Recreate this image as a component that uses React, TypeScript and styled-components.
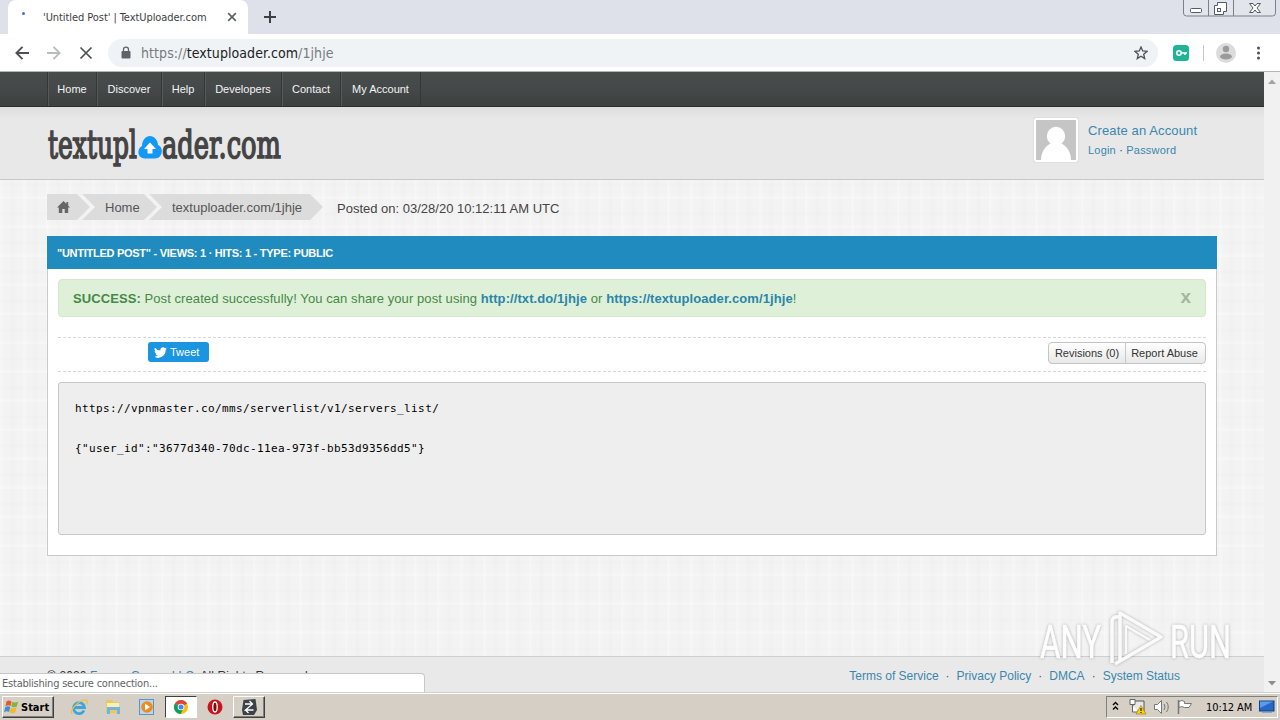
import type { ReactNode } from "react";
import styled, { createGlobalStyle } from "styled-components";

const navItems = [
  { label: "Home", width: 49 },
  { label: "Discover", width: 65 },
  { label: "Help", width: 43 },
  { label: "Developers", width: 77 },
  { label: "Contact", width: 59 },
  { label: "My Account", width: 80 },
];

const footerLinks = ["Terms of Service", "Privacy Policy", "DMCA", "System Status"];

const App = () => {
  return (
    <Screen>
      <GlobalStyle />
      <TabStrip>
        <Tab>
          <Spinner />
          <TabTitle>'Untitled Post' | TextUploader.com</TabTitle>
          <TabClose viewBox="0 0 10 10">
            <path d="M1.2 1.2l7.6 7.6M8.8 1.2L1.2 8.8" stroke="#5f6368" strokeWidth="1.7" />
          </TabClose>
        </Tab>
        <NewTab viewBox="0 0 12 12">
          <path d="M6 0v12M0 6h12" stroke="#3c4043" strokeWidth="2" />
        </NewTab>
        <WindowButtons />
      </TabStrip>
      <Toolbar>
        <ToolbarIcons />
        <AddressBar>
          <svg width="10" height="13" viewBox="0 0 10 13">
            <path d="M2.5 6V3.6a2.5 2.5 0 0 1 5 0V6" fill="none" stroke="#5f6368" strokeWidth="1.3" />
            <rect x="0.5" y="5" width="9" height="7.5" rx="1" fill="#5f6368" />
          </svg>
          <Url>
            https://<b>textuploader.com</b>/1jhje
          </Url>
          <svg width="14" height="14" viewBox="0 0 14 14">
            <path
              d="M7 1l1.7 4 4.3.4-3.3 2.8 1 4.3L7 10.2l-3.7 2.3 1-4.3L1 5.400 5.300 5z"
              fill="none"
              stroke="#4d5156"
              strokeWidth="1.3"
            />
          </svg>
        </AddressBar>
        <BrowserActions />
      </Toolbar>
      <Viewport>
        <Page>
          <Nav>
            {navItems.map((item) => (
              <NavItem key={item.label} $width={item.width}>
                {item.label}
              </NavItem>
            ))}
          </Nav>
          <Header>
            <Logo />
            <Account>
              <Avatar viewBox="0 0 40 40">
                <rect width="40" height="40" fill="#c5c5c5" />
                <circle cx="20" cy="16" r="9.2" fill="#fff" />
                <path d="M5 40c0-9 5-14 10-17h10c5 3 10 8 10 17z" fill="#fff" />
              </Avatar>
              <AccountLinks>
                <Text $size={13} $spacing={0.13} $color="#3a87ad">
                  Create an Account
                </Text>
                <Text $size={11} $spacing={0.2} $color="#3a87ad">
                  Login <i>·</i> Password
                </Text>
              </AccountLinks>
            </Account>
          </Header>
          <Main>
            <CrumbRow>
              <Crumb $width={43} $first>
                <svg width="13" height="13" viewBox="0 0 13 13">
                  <path d="M6.500 0L0 6.400h1.800V12h3.500V8h2.400v4h3.500V6.400H13L11.200 4.600V1H9.400v1.800z" fill="#666" />
                </svg>
              </Crumb>
              <Crumb $width={75}>Home</Crumb>
              <Crumb $width={174}>textuploader.com/1jhje</Crumb>
              <Posted>Posted on: 03/28/20 10:12:11 AM UTC</Posted>
            </CrumbRow>
            <Panel>
              <PanelTitle>"UNTITLED POST" - VIEWS: 1 · HITS: 1 - TYPE: PUBLIC</PanelTitle>
              <PanelBody>
                <Alert>
                  <AlertText>
                    <strong>SUCCESS:</strong> Post created successfully! You can share your post using{" "}
                    <a>http://txt.do/1jhje</a> or <a>https://textuploader.com/1jhje</a>!
                  </AlertText>
                  <AlertClose>x</AlertClose>
                </Alert>
                <ShareRow>
                  <Tweet>
                    <svg width="13" height="12" viewBox="0 0 24 22">
                      <path
                        d="M24 4.600a10 10 0 0 1-2.800.8 5 5 0 0 0 2.200-2.700 10 10 0 0 1-3.100 1.200 4.900 4.900 0 0 0-8.400 4.500A14 14 0 0 1 1.700 3.200 4.900 4.900 0 0 0 3.200 9.700 5 5 0 0 1 1 9.100a4.900 4.900 0 0 0 3.900 4.900 5 5 0 0 1-2.200.1 4.900 4.900 0 0 0 4.600 3.400A9.900 9.900 0 0 1 0 19.500 14 14 0 0 0 21.500 7z"
                        fill="#fff"
                      />
                    </svg>
                    Tweet
                  </Tweet>
                  <ButtonGroup>
                    <Button $width={76}>Revisions (0)</Button>
                    <Button $width={80}>Report Abuse</Button>
                  </ButtonGroup>
                </ShareRow>
                <Code>
                  {'https://vpnmaster.co/mms/serverlist/v1/servers_list/\n\n{"user_id":"3677d340-70dc-11ea-973f-bb53d9356dd5"}'}
                </Code>
              </PanelBody>
            </Panel>
          </Main>
          <Footer>
            <Copyright>
              © 2020 <a>Fusom Group, LLC</a>. All Rights Reserved.
            </Copyright>
            <FooterLinks>
              {footerLinks.map((link) => (
                <a key={link}>{link}</a>
              ))}
            </FooterLinks>
          </Footer>
        </Page>
        <Scrollbar>
          <svg width="8" height="5" viewBox="0 0 8 5">
            <path d="M0 5l4-4.500L8 5z" fill="#a3a3a3" />
          </svg>
          <svg width="8" height="5" viewBox="0 0 8 5">
            <path d="M0 0l4 4.500L8 0z" fill="#8c8c8c" />
          </svg>
        </Scrollbar>
        <StatusBubble>Establishing secure connection...</StatusBubble>
        <Watermark />
      </Viewport>
      <Taskbar>
        <StartButton>
          <svg width="16" height="16" viewBox="0 0 16 16">
            <path d="M2.500 2.500c2-1.500 3.500-1 5 0L6.500 7c-1.500-1-3-1-5 .2z" fill="#e8562a" />
            <path d="M8.300 2.800c2 1.200 4 .8 6-.3l-1.500 5c-1.800 1-3.800 1.200-5.500-.2z" fill="#7db93b" />
            <path d="M1.300 8.200c2-1.300 3.500-1 5-.1L5 13c-1.500-1-3-1-5 .3z" fill="#3f8fd6" />
            <path d="M7 8.500c2 1.200 3.800 1 5.500 0l-1.300 5c-1.800 1-3.500 1-5.400-.2z" fill="#f6b72b" />
          </svg>
          Start
        </StartButton>
        <QuickLaunch>
          <TaskSlot>
            <IeIcon />
          </TaskSlot>
          <TaskSlot>
            <FolderIcon />
          </TaskSlot>
          <TaskSlot>
            <MediaIcon />
          </TaskSlot>
          <TaskSlot $state="active">
            <ChromeIcon />
          </TaskSlot>
          <TaskSlot>
            <OperaIcon />
          </TaskSlot>
          <TaskSlot $state="raised">
            <ArrowsIcon />
          </TaskSlot>
        </QuickLaunch>
        <Tray />
      </Taskbar>
    </Screen>
  );
};

export default App;

const Logo = () => (
  <LogoSvg viewBox="0 0 250 52">
    <g fill="#444" stroke="#444" strokeWidth="1.7" fontFamily="DejaVu Serif, serif" fontSize="39.500">
      <text x="1" y="34" textLength="89" lengthAdjust="spacingAndGlyphs">
        textupl
      </text>
      <text x="115" y="34" textLength="119" lengthAdjust="spacingAndGlyphs">
        ader.com
      </text>
    </g>
    <path d="M98 34.500c-8 0-8.500-10-3-12.500 0-6 4-10 8-10s8 4 8 9c6 2 5 13.500-3 13.500z" fill="#1398f5" />
    <path d="M103 18.500l6 6.500h-3.500v4.500h-5V25H97z" fill="#fff" />
  </LogoSvg>
);

const WindowButtons = () => (
  <WindowButtonsSvg viewBox="0 0 94 18">
    <path d="M.5 0v13q0 3 3 3h86q3 0 3-3V0M25.500 0v16M50.500 0v16" fill="#e2e5eb" stroke="#7b808a" />
    <rect x="7.500" y="8.500" width="11" height="4" rx="1" fill="#fff" stroke="#555b66" />
    <path d="M34.500 2.500h9v9h-3v3h-9v-9h3z" fill="#fff" stroke="#555b66" />
    <rect x="34.500" y="8.500" width="3" height="3" fill="none" stroke="#555b66" />
    <path
      d="M66.500 3.500h3.500l2 2.500 2-2.500h3.500L74 8l3.500 4.500H74L72 10l-2 2.500h-3.500L70 8z"
      fill="#fff"
      stroke="#555b66"
    />
  </WindowButtonsSvg>
);

const ToolbarIcons = () => (
  <svg width="80" height="16" viewBox="0 0 80 16" fill="none" strokeWidth="1.9">
    <path d="M15 8H2.500M8.500 1.800L2.400 8l6.100 6.200" stroke="#4d5156" />
    <path d="M33 8h12.500M39.500 1.800L45.600 8l-6.100 6.200" stroke="#babcbe" />
    <path d="M66.500 2.500l11 11M77.500 2.500l-11 11" stroke="#4d5156" strokeWidth="1.7" />
  </svg>
);

const BrowserActions = () => (
  <svg width="100" height="22" viewBox="0 0 100 22">
    <rect x="5" y="3" width="16" height="16" rx="3.500" fill="#1fb495" />
    <circle cx="11" cy="11" r="2.200" fill="none" stroke="#fff" strokeWidth="1.600" />
    <path d="M13 11h6M17 11v2" stroke="#fff" strokeWidth="1.600" />
    <path d="M35.500 3v16" stroke="#c6c8cc" />
    <circle cx="58" cy="11" r="10" fill="#dcdcdc" />
    <circle cx="58" cy="7" r="3.200" fill="#9b9b9b" />
    <ellipse cx="58" cy="14.500" rx="6" ry="3" fill="#9b9b9b" />
    <circle cx="90.500" cy="6" r="1.500" fill="#4d5156" />
    <circle cx="90.500" cy="11" r="1.500" fill="#4d5156" />
    <circle cx="90.500" cy="16" r="1.500" fill="#4d5156" />
  </svg>
);

const Watermark = () => (
  <WatermarkSvg viewBox="0 0 220 64">
    <g fontFamily="Roboto, sans-serif" fontSize="47" fill="#fdfdfd" stroke="#fdfdfd" strokeWidth="0.6">
      <text x="2" y="49" textLength="61" lengthAdjust="spacingAndGlyphs">
        ANY
      </text>
      <text x="132" y="49" textLength="61" lengthAdjust="spacingAndGlyphs">
        RUN
      </text>
    </g>
    <g fill="none" stroke="#fafafa" strokeWidth="3.600" strokeLinejoin="round">
      <path d="M81 8q-7-1-7 5v41" />
      <path d="M82 52V4l41 24-46 27" />
      <path d="M88 45V17l24 14" strokeWidth="2.200" />
    </g>
  </WatermarkSvg>
);

const IeIcon = () => (
  <svg width="18" height="18" viewBox="0 0 18 18" fill="none">
    <path d="M14 12.500A5.500 5.500 0 1 1 14.500 9.500H5" stroke="#3aa5e0" strokeWidth="2.800" />
    <path d="M2 16C-1 12 10 1 16.500 2c1.500.5.500 3-.5 4.500" stroke="#efc13b" strokeWidth="1.300" />
  </svg>
);

const FolderIcon = () => (
  <svg width="18" height="18" viewBox="0 0 18 18">
    <path d="M2 2h6l1 2h6v11H2z" fill="#e9c860" />
    <path d="M3 5h12v4H3z" fill="#fbf0b4" />
    <path d="M3 9h13v7h-3v-4H6v4H3z" fill="#6fb5de" />
  </svg>
);

const MediaIcon = () => (
  <svg width="18" height="18" viewBox="0 0 18 18">
    <rect x="1.500" y="1.500" width="14" height="15" fill="#b9d6ee" stroke="#5b94c6" />
    <circle cx="9" cy="9" r="5.800" fill="#f08a1c" />
    <path d="M7 5.500l5 3.500-5 3.500z" fill="#fff" />
  </svg>
);

const ChromeIcon = () => (
  <svg width="16" height="16" viewBox="0 0 16 16">
    <circle cx="8" cy="8" r="7" fill="#f4c20d" />
    <path d="M8 8L1.900 4.500a7 7 0 0 1 12.200 0z" fill="#db4437" />
    <path d="M8 8L1.900 4.500A7 7 0 0 0 7.500 15l3-5.500z" fill="#0f9d58" />
    <circle cx="8" cy="8" r="3.300" fill="#fff" />
    <circle cx="8" cy="8" r="2.500" fill="#4285f4" />
  </svg>
);

const OperaIcon = () => (
  <svg width="16" height="16" viewBox="0 0 16 16">
    <circle cx="8" cy="8" r="7.500" fill="#c4161c" />
    <ellipse cx="8" cy="8" rx="2.200" ry="5" fill="#7d0a0e" stroke="#fff" strokeWidth="1.300" />
  </svg>
);

const ArrowsIcon = () => (
  <svg width="18" height="18" viewBox="0 0 18 18">
    <path d="M3.500 2l12-1 1.500 11-3 5H3l-1-5z" fill="#3c4148" />
    <path d="M5 6h7M9.500 3L12.500 6l-7 6h8M8.500 9.500L5.500 12l3 3" fill="none" stroke="#fff" strokeWidth="1.300" />
  </svg>
);

const Tray = () => (
  <TrayBox>
    <svg width="90" height="20" viewBox="0 0 90 20" fill="none">
      <path d="M6 8l2.500-2.500L11 8M6 12.500L8.500 10 11 12.500" stroke="#000" strokeWidth="1.400" />
      <path d="M26 4h11v10H26z" fill="#e8e8e8" stroke="#555" />
      <path d="M23 2.500h5v5h-5zM25.500 8v7h6" fill="#fff" stroke="#666" />
      <path d="M34 8.500l5 8.500H29z" fill="#f6d21b" stroke="#a58400" strokeWidth="0.700" />
      <path d="M34 11v3M34 15v1" stroke="#000" />
      <path d="M47.500 7.500h3l4-4v13l-4-4h-3z" fill="#fff" stroke="#777" />
      <path d="M57 7q2 3 0 6M59.500 5q3.500 5 0 10" stroke="#777" />
      <path d="M71.500 3v14" stroke="#777" strokeWidth="1.500" />
      <path d="M72 4.500q3-2 5.500 0v2h7l-2.500 4h-4.500q-3-2-5.500 0z" fill="#fff" stroke="#777" />
    </svg>
    <Clock>10:12 AM</Clock>
    <svg width="16" height="14" viewBox="0 0 16 14">
      <rect x="0.500" y="1" width="14.500" height="10" fill="#2668c5" stroke="#173e82" />
      <path d="M1 1.500h13L1 8z" fill="#5b9cea" />
      <path d="M3 12.500h10" stroke="#8aa6c8" />
    </svg>
  </TrayBox>
);

const Text = ({ children, ...rest }: { children: ReactNode; $size: number; $spacing: number; $color: string }) => (
  <TextLine {...rest}>{children}</TextLine>
);

const GlobalStyle = createGlobalStyle`
  * {
    box-sizing: border-box;
  }
  body {
    margin: 0;
    overflow: hidden;
    font-family: "Liberation Sans", Arial, sans-serif;
  }
  svg {
    display: block;
    flex-shrink: 0;
  }
`;

const Screen = styled.div`
  display: flex;
  flex-direction: column;
  width: 1280px;
  height: 720px;
  overflow: hidden;
  background: #fff;
`;

const TabStrip = styled.div`
  display: flex;
  height: 34px;
  flex-shrink: 0;
  padding-left: 8px;
  background: #dee1e9;
`;

const Tab = styled.div`
  display: flex;
  align-items: center;
  width: 240px;
  padding: 0 11px 0 14px;
  border-radius: 8px 8px 0 0;
  background: #fff;
`;

const Spinner = styled.span`
  width: 3px;
  height: 3px;
  margin: -8px 18px 0 0;
  border-radius: 50%;
  background: #3b78c4;
`;

const TabTitle = styled.span`
  flex: 1;
  color: #3c4043;
  font-family: "DejaVu Sans Condensed", "DejaVu Sans", sans-serif;
  font-stretch: condensed;
  font-size: 11px;
  letter-spacing: -0.07px;
  white-space: nowrap;
`;

const TabClose = styled.svg`
  width: 10px;
  height: 10px;
`;

const NewTab = styled.svg`
  width: 12px;
  height: 12px;
  margin: 11px 0 0 16px;
`;

const WindowButtonsSvg = styled.svg`
  width: 94px;
  height: 18px;
  margin-left: auto;
  margin-right: 3px;
`;

const Toolbar = styled.div`
  display: flex;
  align-items: center;
  height: 38px;
  flex-shrink: 0;
  padding-left: 14px;
  border-bottom: 1px solid #b3b5b8;
  background: #fff;
`;

const AddressBar = styled.div`
  display: flex;
  align-items: center;
  width: 1050px;
  height: 28px;
  margin: 0 10px 0 14px;
  padding: 0 10px 0 13px;
  border-radius: 14px;
  background: #f0f3f5;
`;

const Url = styled.span`
  flex: 1;
  margin-left: 10px;
  color: #777b80;
  font-family: "DejaVu Sans Condensed", "DejaVu Sans", sans-serif;
  font-stretch: condensed;
  font-size: 14px;
  letter-spacing: 0.07px;
  b {
    color: #202124;
    font-weight: 400;
  }
`;

const Viewport = styled.div`
  position: relative;
  display: flex;
  height: 620px;
  flex-shrink: 0;
`;

const Page = styled.div`
  display: flex;
  flex-direction: column;
  width: 1264px;
  background-color: #f3f3f3;
  background-image: repeating-linear-gradient(90deg, rgba(255, 255, 255, 0.25) 0 2px, transparent 4px 9px, rgba(0, 0, 0, 0.008) 11px 14px, transparent 16px 23px),
    repeating-linear-gradient(0deg, rgba(255, 255, 255, 0.25) 0 2px, transparent 4px 11px, rgba(0, 0, 0, 0.008) 13px 15px, transparent 17px 29px);
`;

const Nav = styled.div`
  display: flex;
  height: 35px;
  flex-shrink: 0;
  padding-left: 47px;
  border-bottom: 1px solid #2b2d2d;
  background: linear-gradient(#474d4b, #444849 50%, #3c403e);
`;

const NavItem = styled.div<{ $width: number }>`
  display: flex;
  align-items: center;
  justify-content: center;
  width: ${(props) => props.$width}px;
  border-left: 1px solid #343737;
  box-shadow: inset 1px 0 #565b5a;
  color: #f4f4f4;
  font-size: 11px;
  white-space: nowrap;
  &:last-child {
    width: ${(props) => props.$width + 1}px;
    border-right: 1px solid #343737;
  }
`;

const Header = styled.div`
  display: flex;
  justify-content: space-between;
  height: 73px;
  flex-shrink: 0;
  padding: 11px 0 0 47px;
  border-bottom: 1px solid #c8c8c8;
  background: linear-gradient(#dedede, #e8e8e8 12px);
`;

const LogoSvg = styled.svg`
  width: 250px;
  height: 52px;
  margin-top: 6px;
`;

const Account = styled.div`
  display: flex;
  align-items: flex-start;
  width: 230px;
`;

const Avatar = styled.svg`
  width: 44px;
  height: 44px;
  padding: 2px;
  border-radius: 2px;
  background: #fff;
  box-shadow: 0 0 1px #999;
`;

const AccountLinks = styled.div`
  display: flex;
  flex-direction: column;
  gap: 5px;
  margin: 5px 0 0 10px;
`;

const TextLine = styled.div<{ $size: number; $spacing: number; $color: string }>`
  color: ${(props) => props.$color};
  font-size: ${(props) => props.$size}px;
  letter-spacing: ${(props) => props.$spacing}px;
  line-height: 15px;
  white-space: nowrap;
  i {
    color: #333;
  }
`;

const Main = styled.div`
  height: 476px;
  flex-shrink: 0;
  padding: 14px 47px 0;
`;

const CrumbRow = styled.div`
  display: flex;
  height: 26px;
`;

const Crumb = styled.div<{ $width: number; $first?: boolean }>`
  display: flex;
  align-items: center;
  width: ${(props) => props.$width}px;
  margin-left: ${(props) => (props.$first ? 0 : -8)}px;
  padding-left: ${(props) => (props.$first ? 10 : 23)}px;
  background: #dcdcdc;
  color: #555;
  font-size: 13px;
  white-space: nowrap;
  clip-path: ${(props) =>
    props.$first
      ? "polygon(0 0, calc(100% - 13px) 0, 100% 50%, calc(100% - 13px) 100%, 0 100%)"
      : "polygon(0 0, calc(100% - 13px) 0, 100% 50%, calc(100% - 13px) 100%, 0 100%, 13px 50%)"};
`;

const Posted = styled.div`
  margin-left: 14px;
  color: #444;
  font-size: 13px;
  line-height: 29px;
  white-space: nowrap;
`;

const Panel = styled.div`
  height: 320px;
  margin-top: 16px;
  border: 1px solid #c9c9c9;
  border-top: 0;
  background: #fff;
`;

const PanelTitle = styled.div`
  height: 33px;
  margin: 0 -1px;
  padding-left: 10px;
  background: #1f8bbe;
  color: #fff;
  font-size: 11px;
  font-weight: 700;
  letter-spacing: -0.27px;
  line-height: 34px;
`;

const PanelBody = styled.div`
  padding: 10px;
`;

const Alert = styled.div`
  display: flex;
  justify-content: space-between;
  height: 38px;
  padding: 0 14px;
  border: 1px solid #d3e8c8;
  border-radius: 4px;
  background: #dff0d8;
  line-height: 37px;
`;

const AlertText = styled.div`
  color: #468847;
  font-size: 13px;
  letter-spacing: 0.08px;
  white-space: nowrap;
  a {
    color: #2a86a8;
    font-weight: 700;
  }
`;

const AlertClose = styled.span`
  color: #a3b89f;
  font-size: 19px;
  font-weight: 700;
  line-height: 34px;
`;

const ShareRow = styled.div`
  display: flex;
  justify-content: space-between;
  height: 35px;
  margin-top: 20px;
  padding: 4px 0 0 90px;
  border-top: 1px dashed #d8d8d8;
  border-bottom: 1px dashed #d8d8d8;
`;

const Tweet = styled.div`
  display: flex;
  align-items: center;
  gap: 3px;
  width: 61px;
  height: 20px;
  padding-left: 6px;
  border-radius: 3px;
  background: #1b95e0;
  color: #fff;
  font-size: 11px;
`;

const ButtonGroup = styled.div`
  display: flex;
  height: 22px;
  border: 1px solid #c4c4c4;
  border-radius: 4px;
  background: linear-gradient(#fff, #e8e8e8);
`;

const Button = styled.div<{ $width: number }>`
  width: ${(props) => props.$width}px;
  color: #333;
  font-size: 11px;
  line-height: 20px;
  text-align: center;
  white-space: nowrap;
  & + & {
    padding-right: 2px;
    border-left: 1px solid #c9c9c9;
  }
`;

const Code = styled.pre`
  height: 153px;
  margin: 10px 0 0;
  padding: 16px;
  border: 1px solid #c8c8c8;
  border-radius: 3px;
  background: #eee;
  color: #000;
  font-family: "DejaVu Sans Mono", monospace;
  font-size: 11px;
  letter-spacing: 0.38px;
  line-height: 20px;
`;

const Footer = styled.div`
  display: flex;
  justify-content: space-between;
  height: 36px;
  flex-shrink: 0;
  padding: 0 84px 0 47px;
  border-top: 1px solid #cfcfcf;
  background: #e9e9e9;
  font-size: 12px;
  line-height: 38px;
  white-space: nowrap;
  a {
    color: #3a87ad;
  }
`;

const Copyright = styled.div`
  color: #333;
  letter-spacing: 0.12px;
`;

const FooterLinks = styled.div`
  display: flex;
  a + a::before {
    content: "·";
    margin: 0 7px;
    color: #555;
  }
`;

const Scrollbar = styled.div`
  display: flex;
  flex-direction: column;
  align-items: center;
  justify-content: space-between;
  width: 16px;
  padding: 7px 0 6px;
  background: #f1f1f1;
`;

const StatusBubble = styled.div`
  position: absolute;
  left: 0;
  bottom: 0;
  width: 425px;
  height: 19px;
  padding-left: 2px;
  border: 1px solid #c8c8c8;
  border-width: 1px 1px 0 0;
  border-radius: 0 4px 0 0;
  background: #fff;
  color: #5f6368;
  font-family: "DejaVu Sans Condensed", "DejaVu Sans", sans-serif;
  font-stretch: condensed;
  font-size: 11px;
  letter-spacing: -0.22px;
  line-height: 19px;
`;

const WatermarkSvg = styled.svg`
  position: absolute;
  left: 1038px;
  top: 537px;
  width: 220px;
  height: 64px;
  filter: drop-shadow(0 0 1.5px rgba(0, 0, 0, 0.28));
`;

const Taskbar = styled.div`
  display: flex;
  align-items: center;
  height: 28px;
  flex-shrink: 0;
  padding: 1px 2px 0;
  border-top: 1px solid #d4d0c8;
  box-shadow: inset 0 1px #fff;
  background: #d5cfc6;
`;

const StartButton = styled.div`
  display: flex;
  align-items: center;
  gap: 1px;
  width: 52px;
  height: 22px;
  padding-left: 1px;
  border: 1px solid;
  border-color: #fff #404040 #404040 #fff;
  box-shadow: inset -1px -1px #808080;
  font-family: "DejaVu Sans Condensed", "DejaVu Sans", sans-serif;
  font-stretch: condensed;
  font-size: 11px;
  font-weight: 700;
`;

const QuickLaunch = styled.div`
  display: flex;
  gap: 2px;
  margin-left: 9px;
`;

const TaskSlot = styled.div<{ $state?: "active" | "raised" }>`
  display: flex;
  align-items: center;
  justify-content: center;
  width: 32px;
  height: 22px;
  border: 1px solid transparent;
  ${(props) => props.$state === "active" && "background: #fff; border-color: #404040 #fff #fff #404040;"}
  ${(props) => props.$state === "raised" && "border-color: #fff #404040 #404040 #fff; box-shadow: inset -1px -1px #808080;"}
`;

const TrayBox = styled.div`
  display: flex;
  align-items: center;
  width: 172px;
  height: 22px;
  margin-left: auto;
  border: 1px solid;
  border-color: #808080 #fff #fff #808080;
`;

const Clock = styled.span`
  width: 48px;
  margin: 0 5px 0 9px;
  color: #000;
  font-family: "DejaVu Sans Condensed", "DejaVu Sans", sans-serif;
  font-stretch: condensed;
  font-size: 11px;
  letter-spacing: -0.1px;
  white-space: nowrap;
`;
